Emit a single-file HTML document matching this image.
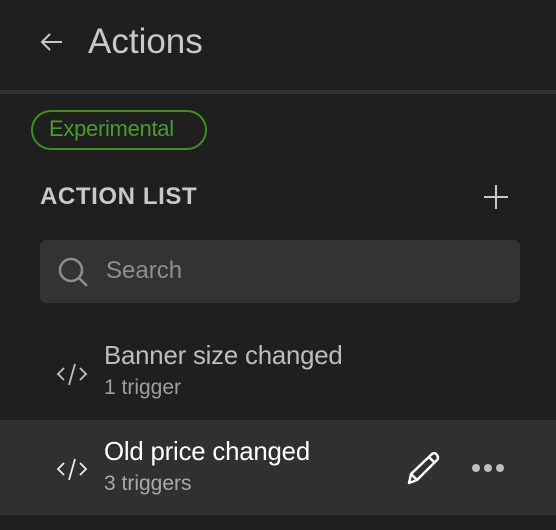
<!DOCTYPE html>
<html><head><style>
body{margin:0;width:556px;height:530px;background:#1f1f1f;font-family:"Liberation Sans",sans-serif;position:relative;overflow:hidden}
.a{position:absolute;white-space:nowrap}
</style></head><body>
<svg class="a" style="left:38px;top:30px" width="26" height="24" viewBox="0 0 26 24"><path d="M4 12H24M12 4L4 12L12 20" stroke="#c8c8c8" stroke-width="2" fill="none"/></svg>
<div class="a" style="left:88px;top:22px;font-size:35px;color:#c8c8c8">Actions</div>
<div class="a" style="left:0;top:90px;width:556px;height:4px;background:#333"></div>
<div class="a" style="left:31px;top:110px;height:36px;border:2px solid #3f8f1f;border-radius:20px;width:172px"></div>
<div class="a" style="left:49px;top:116px;font-size:22px;color:#4a9a2a;letter-spacing:-0.3px">Experimental</div>
<div class="a" style="left:40px;top:183px;font-size:24px;font-weight:bold;letter-spacing:0.6px;color:#c8c8c8">ACTION LIST</div>
<svg class="a" style="left:482px;top:183px" width="28" height="28"><path d="M14 2V26M2 14H26" stroke="#c8c8c8" stroke-width="2"/></svg>
<div class="a" style="left:40px;top:240px;width:480px;height:63px;background:#333;border-radius:6px"></div>
<svg class="a" style="left:56px;top:255px" width="36" height="36"><circle cx="15" cy="15" r="11" stroke="#8e8e8e" stroke-width="2.5" fill="none"/><path d="M23 23L31 31" stroke="#8e8e8e" stroke-width="2.5"/></svg>
<div class="a" style="left:106px;top:257px;font-size:24px;color:#8e8e8e">Search</div>
<svg class="a" style="left:54px;top:360px" width="36" height="28" viewBox="0 0 36 28"><path d="M10 8L4 14L10 20M26 8L32 14L26 20M21 4L15 25" stroke="#c0c0c0" stroke-width="1.8" fill="none"/></svg>
<div class="a" style="left:104px;top:342px;font-size:25.8px;color:#bdbdbd;letter-spacing:-0.2px">Banner size changed</div>
<div class="a" style="left:104px;top:376px;font-size:21px;color:#9e9e9e">1 trigger</div>
<div class="a" style="left:0;top:420px;width:556px;height:95px;background:#303030"></div>
<svg class="a" style="left:54px;top:455px" width="36" height="28" viewBox="0 0 36 28"><path d="M10 8L4 14L10 20M26 8L32 14L26 20M21 4L15 25" stroke="#ececec" stroke-width="1.8" fill="none"/></svg>
<div class="a" style="left:104px;top:438px;font-size:25.8px;color:#fff;letter-spacing:-0.2px">Old price changed</div>
<div class="a" style="left:104px;top:472px;font-size:21px;color:#a8a8a8">3 triggers</div>
<svg class="a" style="left:406px;top:450px" width="36" height="36" viewBox="0 0 36 36"><path d="M3 33L5 24L26 4Q29 2 31 5Q33 8 31 10L11 30Z M5 24L11 30 M23 7L28 12" stroke="#fff" stroke-width="2.5" fill="none" stroke-linejoin="round"/></svg>
<div class="a" style="left:472px;top:464px;width:8px;height:8px;border-radius:50%;background:#bdbdbd"></div>
<div class="a" style="left:484px;top:464px;width:8px;height:8px;border-radius:50%;background:#bdbdbd"></div>
<div class="a" style="left:496px;top:464px;width:8px;height:8px;border-radius:50%;background:#bdbdbd"></div>
</body></html>
